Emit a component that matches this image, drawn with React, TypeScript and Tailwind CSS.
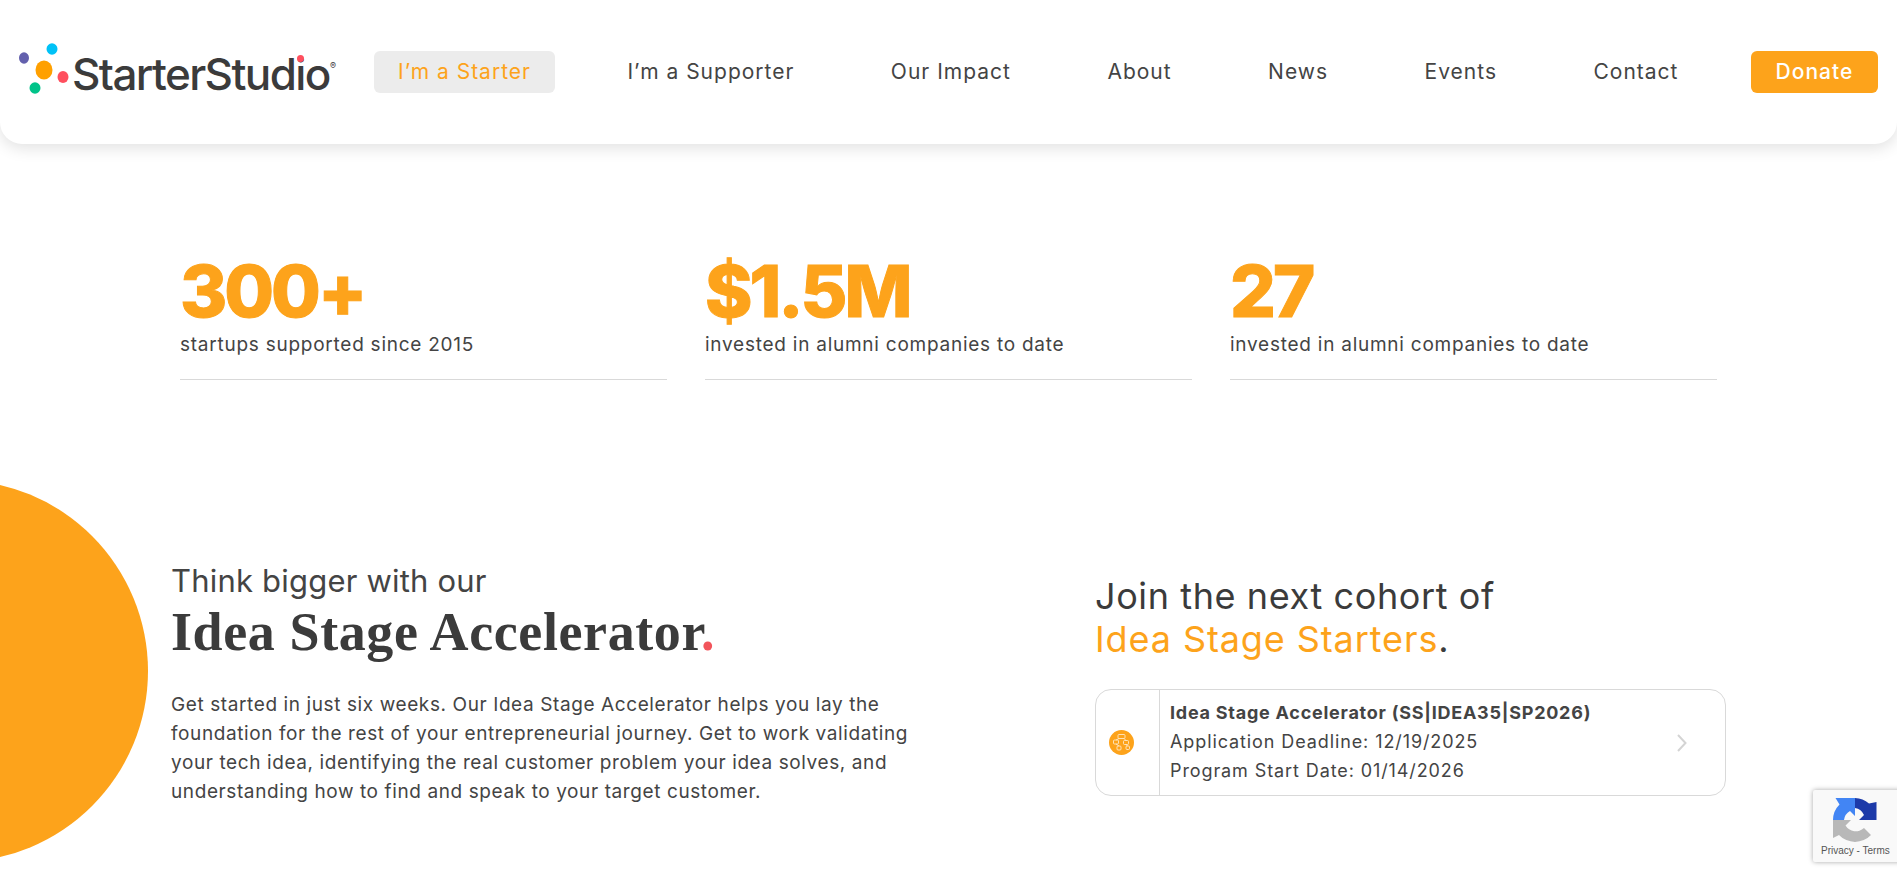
const orange = "#fda31b";

function NavItem({ children, active }: { children: React.ReactNode; active?: boolean }) {
  return (
    <a className={active ? "h-[42px] px-[24px] rounded-[6px] bg-[#ececec] text-[#fda31b] flex items-center justify-center whitespace-nowrap" : "h-[42px] px-[24px] flex items-center justify-center text-[#444444] whitespace-nowrap"}>
      {children}
    </a>
  );
}

function Stat({ value, label }: { value: string; label: string }) {
  return (
    <div className="w-[487px] h-[128px] border-b border-[#d9d9d9]">
      <div className="text-[72px] leading-[78px] font-extrabold text-[#fda31b] tracking-[-3px] [-webkit-text-stroke:1px_#fda31b]">{value}</div>
      <div className="text-[19px] leading-[28px] tracking-[0.75px] text-[#444444] mt-[1px]">{label}</div>
    </div>
  );
}

export default function App() {
  return (
    <div className="relative h-[874px] w-full overflow-hidden bg-white font-['Inter',sans-serif]">
      <header className="h-[144px] rounded-b-[22px] bg-white shadow-[0_4px_16px_rgba(0,0,0,0.12)] flex items-center pl-[18px] pr-[19px]">
        <div className="relative w-[356px] h-[60px] shrink-0 self-center -mt-[4px]">
          <svg className="absolute left-0 top-[3px]" width="56" height="56" viewBox="0 0 56 56">
            <ellipse cx="6" cy="15" rx="5" ry="5.700" fill="#6360ad" />
            <ellipse cx="34" cy="6" rx="5.500" ry="5.700" fill="#00c2f7" />
            <ellipse cx="26" cy="27" rx="8.500" ry="9.500" fill="#ffa000" />
            <ellipse cx="45" cy="34" rx="5.500" ry="6" fill="#ff4f5e" />
            <ellipse cx="17" cy="45" rx="5.500" ry="5.700" fill="#00c389" />
          </svg>
          <div className="absolute left-[54px] top-[8px] text-[44px] leading-[52px] font-medium tracking-[-1.6px] text-[#3b3b3b]">StarterStudio</div>
          <div className="absolute left-[279px] top-[15px] w-[7px] h-[7px] rounded-full bg-[#ff4f5e]" />
          <div className="absolute left-[312px] top-[21px] text-[9px] leading-[10px] text-[#3b3b3b]">®</div>
        </div>
        <nav className="flex-1 flex items-center justify-between text-[21px] tracking-[1px] -mt-[1px]">
          <NavItem active>I’m a Starter</NavItem>
          <NavItem>I’m a Supporter</NavItem>
          <NavItem>Our Impact</NavItem>
          <NavItem>About</NavItem>
          <NavItem>News</NavItem>
          <NavItem>Events</NavItem>
          <NavItem>Contact</NavItem>
          <a className="h-[42px] w-[127px] rounded-[6px] bg-[#fda31b] text-white font-medium flex items-center justify-center">Donate</a>
        </nav>
      </header>

      <section className="flex justify-center gap-[38px] pt-[108px]">
        <Stat value="300+" label="startups supported since 2015" />
        <Stat value="$1.5M" label="invested in alumni companies to date" />
        <Stat value="27" label="invested in alumni companies to date" />
      </section>

      <div className="absolute left-[-234px] top-[480px] w-[382px] h-[382px] rounded-full bg-[#fda31b]" />

      <section className="relative flex pl-[171px] pt-[181px]">
        <div className="w-[924px] shrink-0">
          <div className="text-[31px] leading-[40px] tracking-[0.2px] text-[#444444]">Think bigger with our</div>
          <h1 className="text-[54px] leading-[62px] font-bold tracking-[0.6px] text-[#3b3b3b] font-['Liberation_Serif',serif]">
            Idea Stage Accelerator<span className="text-[#f2545b]">.</span>
          </h1>
          <p className="mt-[27px] w-[760px] text-[19px] leading-[29px] tracking-[0.6px] text-[#444444]">
            Get started in just six weeks. Our Idea Stage Accelerator helps you lay the<br />
            foundation for the rest of your entrepreneurial journey. Get to work validating<br />
            your tech idea, identifying the real customer problem your idea solves, and<br />
            understanding how to find and speak to your target customer.
          </p>
        </div>
        <div className="w-[631px] mt-[14px]">
          <div className="text-[36px] leading-[43px] tracking-[0.6px] text-[#3b3b3b]">Join the next cohort of</div>
          <div className="text-[36px] leading-[43px] tracking-[0.9px] text-[#3b3b3b]"><span className="text-[#fda31b]">Idea Stage Starters</span>.</div>
          <div className="mt-[28px] h-[107px] w-[631px] rounded-[16px] border border-[#d9d9d9] flex items-stretch">
            <div className="w-[64px] shrink-0 border-r border-[#d9d9d9] flex items-center pl-[13px]">
              <svg width="25" height="25" viewBox="0 0 25 25">
                <circle cx="12.500" cy="12.500" r="12.500" fill={orange} />
                <g fill="none" stroke="#ffe9c7" strokeWidth="0.900">
                  <rect x="9" y="4.500" width="7" height="4" rx="1" />
                  <rect x="4.500" y="10" width="5" height="4" rx="1" />
                  <rect x="14.500" y="10.500" width="5" height="4" rx="1" />
                  <rect x="8" y="16" width="4" height="4" rx="1" />
                  <rect x="17" y="16" width="3.500" height="3.500" rx="1" />
                  <path d="M10 8.500 7 10M15 8.500 17 10.500M7 14 10 16M17 14.500 18.500 16" />
                </g>
              </svg>
            </div>
            <div className="flex-1 pl-[10px] pt-[8px] text-[18px] leading-[29px] tracking-[0.9px] text-[#444444]">
              <div className="font-bold tracking-[0.75px]">Idea Stage Accelerator (SS|IDEA35|SP2026)</div>
              <div>Application Deadline: 12/19/2025</div>
              <div>Program Start Date: 01/14/2026</div>
            </div>
            <div className="w-[49px] shrink-0 flex items-center">
              <svg width="12" height="20" viewBox="0 0 12 20" fill="none" stroke="#d4d4d4" strokeWidth="2">
                <path d="M2 2l7.500 8L2 18" />
              </svg>
            </div>
          </div>
        </div>
      </section>

      <div className="absolute left-[1813px] top-[790px] w-[90px] h-[72px] bg-[#f9f9f9] rounded-[2px] shadow-[0_0_5px_rgba(0,0,0,0.35)]">
        <svg className="absolute left-[20px] top-[8px]" width="44" height="44" viewBox="0 0 44 44">
          <path d="M22 0A22 22 0 0 1 36 5.500L43.500 4V22H26L31 17A12 12 0 0 0 22 10Z" fill="#1c3aa9" />
          <path d="M0 22A22 22 0 0 1 6.500 6.500L2.500 0H22V18L17 13A12 12 0 0 0 11 22Z" fill="#4285f4" />
          <path d="M0 22H18L12.500 27.500A12 12 0 0 0 31 30L38 37A22 22 0 0 1 6 37L0 40Z" fill="#b8b8b8" />
        </svg>
        <div className="absolute left-[8px] top-[54px] text-[10px] leading-[14px] whitespace-nowrap text-[#555555] font-['Liberation_Sans',sans-serif]">Privacy - Terms</div>
      </div>
    </div>
  );
}
